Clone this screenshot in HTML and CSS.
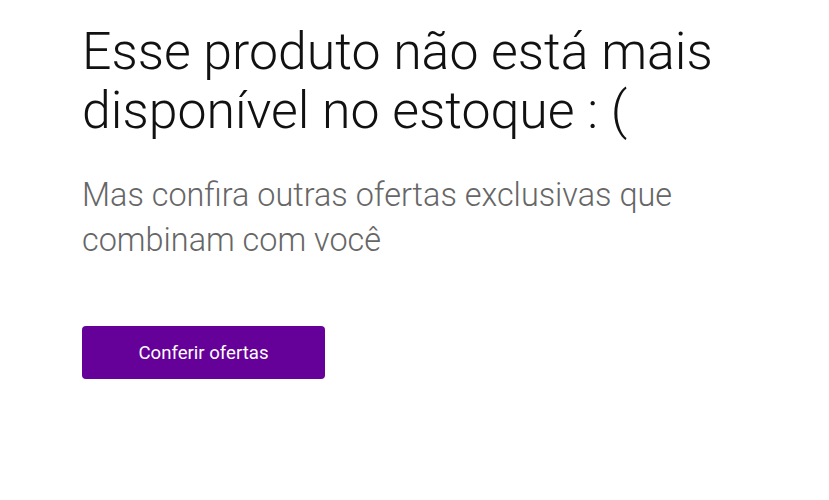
FILE: index.html
```html
<!DOCTYPE html>
<html lang="pt-BR">
<head>
  <meta charset="UTF-8">
  <title>Produto indisponível</title>
  <link rel="stylesheet" href="styles.css">
</head>
<body>
  <main class="unavailable">
    <h1 class="unavailable-title">Esse produto não está mais disponível no estoque : (</h1>
    <p class="unavailable-text">Mas confira outras ofertas exclusivas que combinam com você</p>
    <a class="offers-button" href="#">Conferir ofertas</a>
  </main>
</body>
</html>
```

FILE: styles.css
```css
body {
  margin: 0;
  font-family: Roboto, "Liberation Sans", sans-serif;
  background: #fff;
}

.unavailable {
  padding: 22px 82px 0;
  max-width: 660px;
}

.unavailable-title {
  margin: 0;
  font-size: 51.8px;
  font-weight: 300;
  line-height: 59px;
  color: #111;
}

.unavailable-text {
  margin: 33px 0 0;
  font-size: 32.4px;
  font-weight: 300;
  line-height: 45px;
  color: #666;
}

.offers-button {
  display: flex;
  align-items: center;
  justify-content: center;
  width: 243px;
  height: 53px;
  margin-top: 63px;
  border-radius: 4px;
  background: #650099;
  color: #fff;
  font-size: 18.6px;
  text-decoration: none;
}
```
